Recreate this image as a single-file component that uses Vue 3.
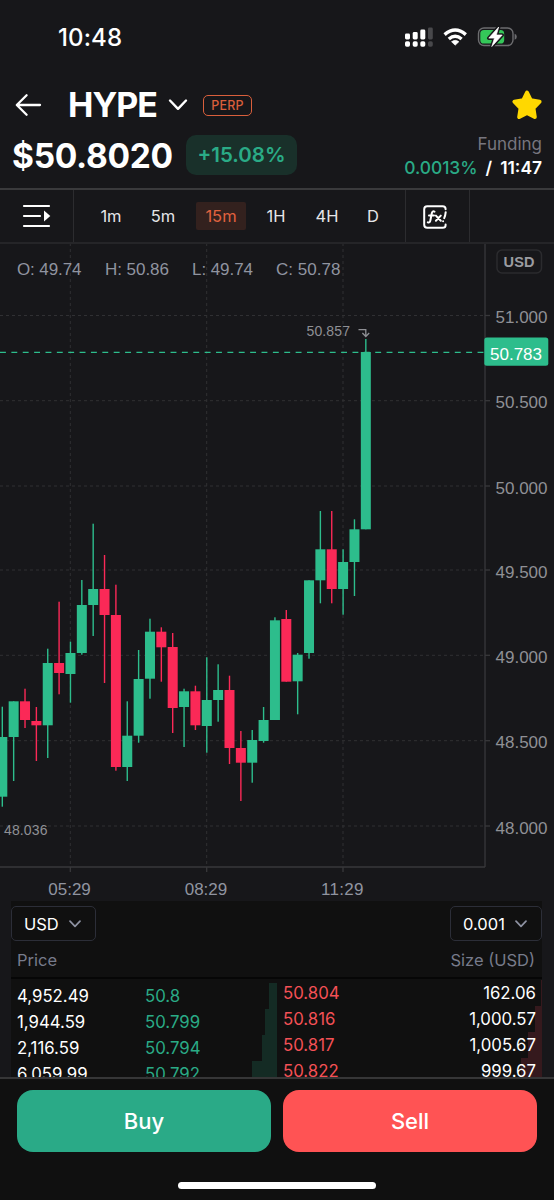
<script setup>
const raw = [
  [706.7, 737, 796.7, 806.7, 'u'], [701.3, 701.3, 737, 781, 'u'], [688.7, 701.3, 720, 728, 'd'],
  [707, 721, 725.3, 761, 'd'], [648.7, 663, 725.3, 758, 'u'], [601.7, 663, 673, 694.3, 'd'],
  [641.7, 653, 674, 702.7, 'u'], [580, 605, 653, 654.7, 'u'], [523.7, 589, 605, 636, 'u'],
  [555, 589, 615, 683, 'd'], [584.7, 615, 767, 770.7, 'd'], [701.3, 735.7, 767, 781, 'u'],
  [650, 679, 735.7, 742.7, 'u'], [618.7, 631.7, 678.7, 698.7, 'u'], [627.3, 631.7, 647.3, 681.7, 'd'],
  [633, 647, 708, 733, 'd'], [688.7, 691.3, 707, 747, 'u'], [685.7, 691.3, 725.3, 730, 'd'],
  [657.3, 700, 726, 752.7, 'u'], [664.3, 690, 700, 721.7, 'u'], [675.7, 690, 748, 764, 'd'],
  [731, 748, 762.7, 801, 'd'], [730, 740, 762.7, 782.7, 'u'], [707, 720, 741, 742.7, 'u'],
  [617.3, 620.3, 720, 720, 'u'], [610, 619, 681.7, 681.7, 'd'], [653, 654.7, 681.3, 714.3, 'u'],
  [580.3, 580.3, 653, 658.7, 'u'], [511, 549.3, 580.3, 603.3, 'u'], [511, 549.3, 589, 603.3, 'd'],
  [549.3, 562, 589, 614.7, 'u'], [519.3, 529.3, 562, 596, 'u'], [339, 352, 529.3, 529.3, 'u']
]
const candles = raw.map(([high, top, bottom, low, dir], i) => ({
  x: 2.3 + i * 11.36, high, top, bottom, low, fill: dir === 'u' ? '#2dbd8c' : '#fb2957'
}))
const levels = [
  [315.5, '51.000'], [400.7, '50.500'], [486, '50.000'], [570, '49.500'],
  [655.3, '49.000'], [740.7, '48.500'], [826, '48.000']
]
const times = [[70.3, '05:29'], [206.7, '08:29'], [343, '11:29']]
const ohlc = [[17, 'O: 49.74', 64.5], [105, 'H: 50.86', 64], [192, 'L: 49.74', 61], [276, 'C: 50.78', 64.5]]
const frames = ['1m', '5m', '15m', '1H', '4H', 'D']
const bids = [
  ['4,952.49', '50.8', 8], ['1,944.59', '50.799', 12], ['2,116.59', '50.794', 15], ['6,059.99', '50.792', 25]
]
const asks = [
  ['50.804', '162.06', 1.5], ['50.816', '1,000.57', 7.5], ['50.817', '1,005.67', 14], ['50.822', '999.67', 21]
]
</script>

<template>
  <div class="screen">
    <header class="head">
      <div class="status">
        <span class="clock">10:48</span>
        <svg class="status-icons" width="114" height="24" viewBox="0 0 114 24">
          <g fill="#fff">
            <rect x="1" y="8.5" width="5" height="6" rx="1.4" /><rect x="1" y="16.3" width="5" height="5.4" rx="1.7" />
            <rect x="8.7" y="7" width="5" height="7.5" rx="1.4" /><rect x="8.7" y="16.3" width="5" height="5.4" rx="1.7" />
            <rect x="16.3" y="4.5" width="5" height="10" rx="1.4" /><rect x="16.3" y="16.3" width="5" height="5.4" rx="1.7" />
          </g>
          <g fill="#48484b">
            <rect x="24" y="2.5" width="4.8" height="12" rx="1.4" /><rect x="24" y="16.3" width="4.8" height="5.4" rx="1.7" />
          </g>
          <g fill="none" stroke="#fff" stroke-width="3.4">
            <path d="M40.6 9.6Q51.2 0.4 61.8 9.6" /><path d="M44.8 14Q51.2 8.4 57.6 14" />
          </g>
          <path d="M51.2 20.2L47.5 16.7Q51.2 13.8 54.9 16.7Z" fill="#fff" stroke="#fff" stroke-width=".6" />
          <rect x="74.5" y="3" width="34.5" height="17.5" rx="5.5" fill="none" stroke="#6c6c6f" stroke-width="1.4" />
          <path d="M110.6 8.8Q112.8 9.5 112.8 11.8T110.6 14.8Z" fill="#6c6c6f" />
          <path d="M80 5H96.5Q100.2 5 100.2 8.7V14.9Q100.2 18.6 96.5 18.6H80Q76.3 18.6 76.3 14.9V8.7Q76.3 5 80 5Z" fill="#34c759" />
          <path d="M94.7 2L84.8 13.1H90.5L87.8 21.5L98.2 10H92.3Z" fill="#fff" stroke="#17171a" stroke-width="3.6" stroke-linejoin="round" />
          <path d="M94.7 2L84.8 13.1H90.5L87.8 21.5L98.2 10H92.3Z" fill="#fff" stroke="#fff" stroke-width=".7" stroke-linejoin="round" />
        </svg>
      </div>
      <div class="title">
        <svg class="back" width="28" height="24" viewBox="0 0 28 24" fill="none" stroke="#fff" stroke-width="2.3" stroke-linecap="round" stroke-linejoin="round">
          <path d="M11.6 2.2L1.8 12L11.6 21.8M2 12H25" />
        </svg>
        <h1>HYPE</h1>
        <svg class="drop" width="20" height="14" viewBox="0 0 20 14" fill="none" stroke="#fff" stroke-width="2.4" stroke-linecap="round" stroke-linejoin="round"><path d="M2 2.5L10 10.8L18 2.5" /></svg>
        <span class="perp">PERP</span>
        <svg class="star" width="32" height="32" viewBox="0 0 32 32">
          <path d="M16 3.6L19.8 11.3L28.6 12.7L22.4 19L23.8 28L16 24L8.2 28L9.6 19L3.4 12.7L12.2 11.3Z" fill="#ffd800" stroke="#ffd800" stroke-width="4" stroke-linejoin="round" />
        </svg>
      </div>
      <div class="quote">
        <span class="price">$50.8020</span>
        <span class="change">+15.08%</span>
        <div class="funding">
          <div class="fl">Funding</div>
          <div class="fv"><span class="rate">0.0013%</span><span class="slash">/</span><span class="count">11:47</span></div>
        </div>
      </div>
    </header>

    <nav class="tools">
      <div class="menu">
        <svg width="30" height="26" viewBox="0 0 30 26">
          <path d="M2 3H27M2 13H18M2 23H27" stroke="#fff" stroke-width="2.2" stroke-linecap="round" />
          <path d="M22 7.5L28.3 13L22 18.5Z" fill="#fff" />
        </svg>
      </div>
      <div class="frames">
        <span v-for="f in frames" :key="f" :class="['frame', 'f' + f, { on: f === '15m' }]">{{ f }}</span>
      </div>
      <div class="fx">
        <svg width="24" height="24" viewBox="0 0 24 24" fill="none" stroke="#fff" stroke-width="2" stroke-linecap="round" stroke-linejoin="round">
          <path d="M22.6 4.3V4Q22.6 1.2 19.6 1.2H4.2Q1.2 1.2 1.2 4.2V19.8Q1.2 22.8 4.2 22.8H19.6Q22.6 22.8 22.6 20.3V19.6" />
          <path d="M11.5 6.6Q9.3 5.7 8.8 8.3L7.4 15.3Q6.9 18.2 4.8 17.3M6 10.5H11" />
          <path d="M12.9 10.6L17.8 15.7M17.8 10.6L12.9 15.7" />
          <path d="M22.7 7.2Q22.4 10.5 21.2 13.2M20.1 16.2V16.3" />
        </svg>
      </div>
      <div class="rest"></div>
    </nav>

    <section class="chart">
      <svg width="554" height="657" viewBox="0 244 554 657">
        <g stroke="#303033" stroke-width="1" stroke-dasharray="3 3">
          <path v-for="l in levels" :key="l[1]" :d="`M0 ${l[0]}H485`" />
          <path v-for="t in times" :key="t[1]" :d="`M${t[0]} 243V867`" />
        </g>
        <g stroke="#38383b" stroke-width="1.3">
          <path d="M485 243V867M0 867H485" fill="none" />
          <path v-for="l in levels" :key="l[1]" :d="`M485 ${l[0]}h5`" />
          <path v-for="t in times" :key="t[1]" :d="`M${t[0]} 867v5`" />
        </g>
        <path d="M0 352.4H485" stroke="#2dbd8c" stroke-width="1.3" stroke-dasharray="5.9 5.47" />
        <g v-for="(c, i) in candles" :key="i" :fill="c.fill">
          <rect :x="c.x - 0.7" :y="c.high" width="1.4" :height="c.low - c.high" />
          <rect :x="c.x - 5" :y="c.top" width="10" :height="c.bottom - c.top" />
        </g>
        <g class="axis" font-size="17" fill="#8f9095">
          <text v-for="o in ohlc" :key="o[1]" :x="o[0]" y="275" :textLength="o[2]" fill="#9094a0">{{ o[1] }}</text>
          <text v-for="l in levels" :key="l[1]" x="495.5" :y="l[0] + 7.7" textLength="52">{{ l[1] }}</text>
          <text v-for="t in times" :key="t[1]" :x="t[0] - 22" y="895" textLength="42.5" fill="#9094a0">{{ t[1] }}</text>
          <text x="306.5" y="336" font-size="14" textLength="43.5">50.857</text>
          <text x="4" y="835" font-size="14" textLength="43.5">48.036</text>
        </g>
        <path d="M358.5 329.7H365.8V336M362.4 333L365.8 336.5L369.2 333" fill="none" stroke="#8f9095" stroke-width="1.3" />
        <rect x="484.3" y="337.5" width="64" height="28.3" rx="2.5" fill="#2dbd8c" />
        <text class="axis" x="490" y="360" font-size="17" textLength="52" fill="#fff">50.783</text>
        <rect x="497" y="250" width="44.5" height="23" rx="5" fill="none" stroke="#2b2b2e" stroke-width="1.5" />
        <text class="axis" x="503.5" y="267" font-size="14.5" font-weight="700" textLength="31" fill="#9b9ca1">USD</text>
      </svg>
    </section>

    <section class="book">
      <div class="selects">
        <span class="select usd">USD<svg width="12" height="8" viewBox="0 0 12 8"><path d="M1 1.2L6 6.3L11 1.2" /></svg></span>
        <span class="select tick">0.001<svg width="12" height="8" viewBox="0 0 12 8"><path d="M1 1.2L6 6.3L11 1.2" /></svg></span>
      </div>
      <div class="labels"><span>Price</span><span>Size (USD)</span></div>
      <div class="sides">
        <div class="bids">
          <div v-for="b in bids" :key="b[1]" class="row">
            <span class="amount">{{ b[0] }}</span><span class="bid">{{ b[1] }}</span>
            <i class="depth" :style="{ width: b[2] + 'px' }"></i>
          </div>
        </div>
        <div class="asks">
          <div v-for="a in asks" :key="a[0]" class="row">
            <span class="ask">{{ a[0] }}</span><span class="amount">{{ a[1] }}</span>
            <i class="depth" :style="{ width: a[2] + 'px' }"></i>
          </div>
        </div>
      </div>
    </section>

    <footer class="foot">
      <div class="buttons">
        <button class="buy">Buy</button>
        <button class="sell">Sell</button>
      </div>
      <div class="home"></div>
    </footer>
  </div>
</template>

<style>
body { margin: 0; background: #17171a; }
</style>

<style scoped>
.screen { width: 554px; height: 1200px; overflow: hidden; display: flex; flex-direction: column; background: #17171a; color: #fff; font-family: Inter, "Liberation Sans", sans-serif; box-sizing: border-box; }
.screen * { box-sizing: border-box; }
.head { height: 190px; border-bottom: 2px solid #3a3a3c; padding: 23px 10px 0 12px; flex: none; }
.status { height: 55px; display: flex; align-items: flex-start; justify-content: space-between; padding: 0 26px 0 46px; }
.clock { font-size: 24px; font-weight: 500; line-height: 30px; letter-spacing: 0.1px; }
.status-icons { margin-top: 2px; }
.title { height: 54px; display: flex; align-items: center; }
.back { margin-left: 3px; }
h1 { margin: 0 0 0 25px; font-size: 34px; font-weight: 700; line-height: 40px; width: 90px; letter-spacing: -1px; }
.drop { margin-left: 10px; }
.perp { margin-left: 15px; width: 49px; height: 21px; border: 1.5px solid #d95f3c; border-radius: 5px; color: #d95f3c; font-size: 12.5px; font-weight: 500; line-height: 19px; text-align: center; letter-spacing: 0.2px; }
.star { margin: 0 1px 0 auto; }
.quote { display: flex; height: 57px; padding-top: 3px; }
.price { font-size: 33.5px; font-weight: 700; line-height: 43px; width: 174px; letter-spacing: -0.3px; }
.change { width: 111px; height: 40px; border-radius: 10px; background: #19302a; color: #2aab86; font-size: 20.5px; font-weight: 600; line-height: 39px; text-align: center; }
.funding { margin-left: auto; padding-right: 2px; text-align: right; white-space: nowrap; }
.fl { color: #77767f; font-size: 17px; line-height: 19px; }
.fv { font-size: 17.4px; line-height: 27px; font-weight: 600; }
.rate { color: #2aab86; font-weight: 500; }
.slash { margin: 0 8px; }
.tools { height: 54px; display: flex; flex: none; border-bottom: 2px solid #252528; }
.menu { width: 74px; border-right: 1.5px solid #2c2c2f; padding: 13px 0 0 22px; }
.frames { width: 332px; border-right: 1.5px solid #2c2c2f; display: flex; align-items: center; padding-left: 17px; font-size: 16.5px; color: #e5e5e8; }
.frame { height: 28px; line-height: 28px; text-align: center; width: 40px; border-radius: 2px; }
.f5m { margin-left: 12px; }
.f15m { width: 50px; margin-left: 13px; }
.f1H { margin-left: 10px; }
.f4H { margin-left: 11px; }
.fD { margin-left: 6px; }
.on { background: #33211e; color: #e0623e; }
.fx { width: 64px; border-right: 1.5px solid #2c2c2f; padding: 15px 0 0 17px; }
.chart { height: 657px; flex: none; }
.chart svg { display: block; }
.axis { font-family: "Liberation Sans", Arial, sans-serif; }
.book { height: 176px; flex: none; margin: 0 12px 0 11px; background: #101010; overflow: hidden; }
.selects { display: flex; justify-content: space-between; padding-top: 5px; height: 40px; }
.select { height: 35px; border: 1.5px solid #2c2e38; border-radius: 5px; font-size: 16.5px; line-height: 34px; display: flex; align-items: center; justify-content: space-between; padding: 0 14px 0 12px; }
.usd { width: 85px; }
.tick { width: 92px; }
.select svg { fill: none; stroke: #8e92a2; stroke-width: 1.7; stroke-linecap: round; stroke-linejoin: round; }
.labels { display: flex; justify-content: space-between; height: 38px; line-height: 38px; padding: 0 7px 0 6px; font-size: 16.5px; color: #777b8b; border-bottom: 2px solid #060606; }
.sides { display: flex; font-size: 16.8px; }
.bids { width: 266px; padding-top: 4px; }
.asks { width: 265px; padding: 1px 0 0 6px; }
.row { position: relative; height: 26px; line-height: 27px; display: flex; }
.bids .row { padding-left: 6px; }
.bids .amount { width: 128px; }
.asks .row { padding-right: 6px; justify-content: space-between; }
.asks .amount { z-index: 1; }
.bid { color: #2aab86; }
.ask { color: #f45156; }
.depth { position: absolute; right: 0; top: 0; height: 26px; background: #142b24; }
.asks .depth { background: #35191d; }
.foot { flex: 1; background: #101010; border-top: 2px solid #363637; padding: 11px 17px 0; }
.buttons { display: flex; gap: 12px; }
button { width: 254px; height: 62px; border: 0; border-radius: 16px; font: 500 22px Inter, sans-serif; color: #fff; padding: 0; }
.buy { background: #2aaa87; }
.sell { background: #ff5354; }
.home { width: 198px; height: 7px; border-radius: 4px; background: #fff; margin: 30px auto 0; }
</style>
